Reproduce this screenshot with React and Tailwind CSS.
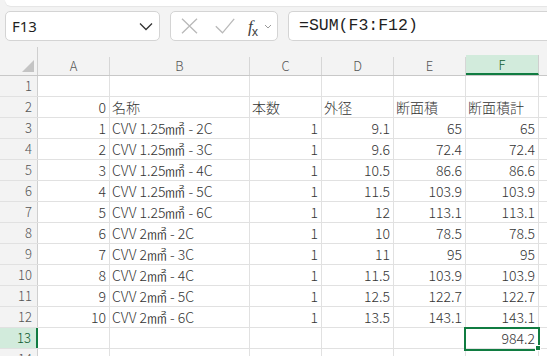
import React from "react";

const COLS = [
  { key: "A", w: "w-[72px]" },
  { key: "B", w: "w-[140px]" },
  { key: "C", w: "w-[72px]" },
  { key: "D", w: "w-[72px]" },
  { key: "E", w: "w-[72px]" },
  { key: "F", w: "w-[73px]" },
];

const M = "\u339F";

const ROWS = [
  [],
  [{ v: "0", r: true }, { v: "名称" }, { v: "本数" }, { v: "外径" }, { v: "断面積" }, { v: "断面積計" }],
  ["1", "1.25", "2C", "1", "9.1", "65", "65"],
  ["2", "1.25", "3C", "1", "9.6", "72.4", "72.4"],
  ["3", "1.25", "4C", "1", "10.5", "86.6", "86.6"],
  ["4", "1.25", "5C", "1", "11.5", "103.9", "103.9"],
  ["5", "1.25", "6C", "1", "12", "113.1", "113.1"],
  ["6", "2", "2C", "1", "10", "78.5", "78.5"],
  ["7", "2", "3C", "1", "11", "95", "95"],
  ["8", "2", "4C", "1", "11.5", "103.9", "103.9"],
  ["9", "2", "5C", "1", "12.5", "122.7", "122.7"],
  ["10", "2", "6C", "1", "13.5", "143.1", "143.1"],
  ["", null, null, "", "", "", "984.2"],
  [],
];

function normRow(row) {
  if (row.length === 0) return COLS.map(() => ({ v: "" }));
  if (typeof row[0] === "object") return row;
  const [a, size, core, c, d, e, f] = row;
  const b =
    size === null
      ? { v: "" }
      : {
          v: (
            <>
              CVV {size}
              <span className="inline-block origin-left scale-x-[1.4] mr-[6px]">{M}</span> - {core}
            </>
          ),
        };
  return [
    { v: a, r: true },
    b,
    { v: c, r: true },
    { v: d, r: true },
    { v: e, r: true },
    { v: f, r: true },
  ];
}

function Cell({ w, cell, selected }) {
  return (
    <div
      className={`relative ${w} h-full shrink-0 border-r border-[#e1e1e1] flex items-end overflow-visible ${
        cell.r ? "justify-end pr-[3px]" : "justify-start pl-[2px]"
      }`}
    >
      <span className="whitespace-nowrap leading-[16px] pb-[2px] text-[14px] font-light text-[#333]">{cell.v}</span>
      {selected && (
        <>
          <div className="absolute left-[-2px] top-[-1px] w-[76px] h-[24px] border-2 border-[#107c41] z-10" />
          <div className="absolute left-[69px] top-[17px] w-[6px] h-[6px] bg-[#107c41] border border-white z-20" />
        </>
      )}
    </div>
  );
}

export default function App() {
  return (
    <div
      className="w-[547px] h-[356px] overflow-hidden bg-[#f3f3f3] flex flex-col"
      style={{ fontFamily: '"Noto Sans CJK JP", "Noto Sans", sans-serif' }}
    >
      {/* ribbon bottom */}
      <div className="h-[6px] ml-[5px] bg-white rounded-bl-[8px] shadow-[0_1px_1px_rgba(0,0,0,0.06)] shrink-0" />
      {/* formula bar */}
      <div className="h-[41px] shrink-0 flex items-start pt-[5px] pl-[5px]">
        <div className="w-[155px] h-[30px] bg-white border border-[#d4d4d4] rounded-[5px] flex items-center justify-between pl-[6px] pr-[4px]">
          <span
            className="text-[15px] text-[#1f1f1f] leading-none"
            style={{ fontFamily: '"Noto Sans", sans-serif' }}
          >
            F13
          </span>
          <svg width="14" height="9" viewBox="0 0 14 9" className="mr-[2px]">
            <path d="M1 1.5 L7 7.5 L13 1.5" fill="none" stroke="#333" strokeWidth="1.3" />
          </svg>
        </div>
        <div className="ml-[10px] w-[108px] h-[30px] bg-white border border-[#d4d4d4] rounded-[5px] flex items-center pl-[10px]">
          <svg width="17" height="16" viewBox="0 0 17 16">
            <path d="M1 0.8 L16 15.2 M16 0.8 L1 15.2" stroke="#b9b9b9" strokeWidth="1.3" fill="none" />
          </svg>
          <svg width="20" height="16" viewBox="0 0 20 16" className="ml-[17px]">
            <path d="M0.8 8.2 L7.5 14.8 L19.2 0.8" stroke="#b9b9b9" strokeWidth="1.3" fill="none" />
          </svg>
          <span
            className="ml-[13px] text-[#404040] leading-none flex items-end"
            style={{ fontFamily: '"Liberation Serif", serif' }}
          >
            <span className="italic text-[17px]">f</span>
            <span className="text-[12px] -ml-[1px] mb-[-3px]" style={{ fontFamily: '"Noto Sans", sans-serif' }}>x</span>
          </span>
          <svg width="8" height="5" viewBox="0 0 8 5" className="ml-[6px]">
            <path d="M1 1 L4 4 L7 1" stroke="#9a9a9a" strokeWidth="1" fill="none" />
          </svg>
        </div>
        <div className="ml-[10px] flex-1 h-[30px] bg-white border border-[#d4d4d4] border-r-0 rounded-l-[5px] flex items-center pl-[10px]">
          <span
            className="text-[16.5px] text-[#1f1f1f] leading-none"
            style={{ fontFamily: '"Liberation Mono", monospace' }}
          >
            =SUM(F3:F12)
          </span>
        </div>
      </div>

      {/* grid */}
      <div className="flex flex-col shrink-0">
        {/* column header */}
        <div className="h-[29px] flex border-b border-[#c8c8c8] shrink-0">
          <div className="w-[38px] h-full shrink-0 border-r border-[#cfcfcf] flex items-end justify-end pr-[3px] pb-[3px]">
            <svg width="12" height="12" viewBox="0 0 12 12">
              <path d="M12 0 L12 12 L0 12 Z" fill="#c4c4c4" />
            </svg>
          </div>
          {COLS.map((c) =>
            c.key === "F" ? (
              <div key={c.key} className={`${c.w} h-full shrink-0 flex flex-col justify-end`}>
                <div className="h-[20px] bg-[#d2ebdc] border-b-2 border-[#107c41] border-r border-r-[#cfcfcf] flex items-center justify-center text-[13px] font-light text-[#0e5c30] leading-none pt-[1px]">
                  F
                </div>
              </div>
            ) : (
              <div key={c.key} className={`${c.w} h-full shrink-0 flex flex-col justify-end`}>
                <div className="h-[18px] border-r border-[#d6d6d6] flex items-center justify-center text-[13px] font-light text-[#555] leading-none pb-[1px]">
                  {c.key}
                </div>
              </div>
            )
          )}
          <div className="flex-1 h-full flex flex-col justify-end">
            <div className="h-[18px]" />
          </div>
        </div>
        {/* rows */}
        {ROWS.map((row, ri) => {
          const n = ri + 1;
          const sel = n === 13;
          const cells = normRow(row);
          return (
            <div key={n} className="h-[21px] flex border-b border-[#e1e1e1] bg-white shrink-0">
              <div
                className={`w-[38px] h-full shrink-0 flex items-end justify-end pr-[5px] ${
                  sel
                    ? "bg-[#d2ebdc] border-r-2 border-[#107c41] text-[#0e5c30]"
                    : "bg-[#f3f3f3] border-r border-[#cfcfcf] text-[#555]"
                }`}
              >
                <span className="text-[13px] font-light leading-[16px] pb-[2px]">{n}</span>
              </div>
              {COLS.map((c, ci) => (
                <Cell key={c.key} w={c.w} cell={cells[ci]} selected={sel && c.key === "F"} />
              ))}
              <div className="flex-1 h-full" />
            </div>
          );
        })}
      </div>
    </div>
  );
}
